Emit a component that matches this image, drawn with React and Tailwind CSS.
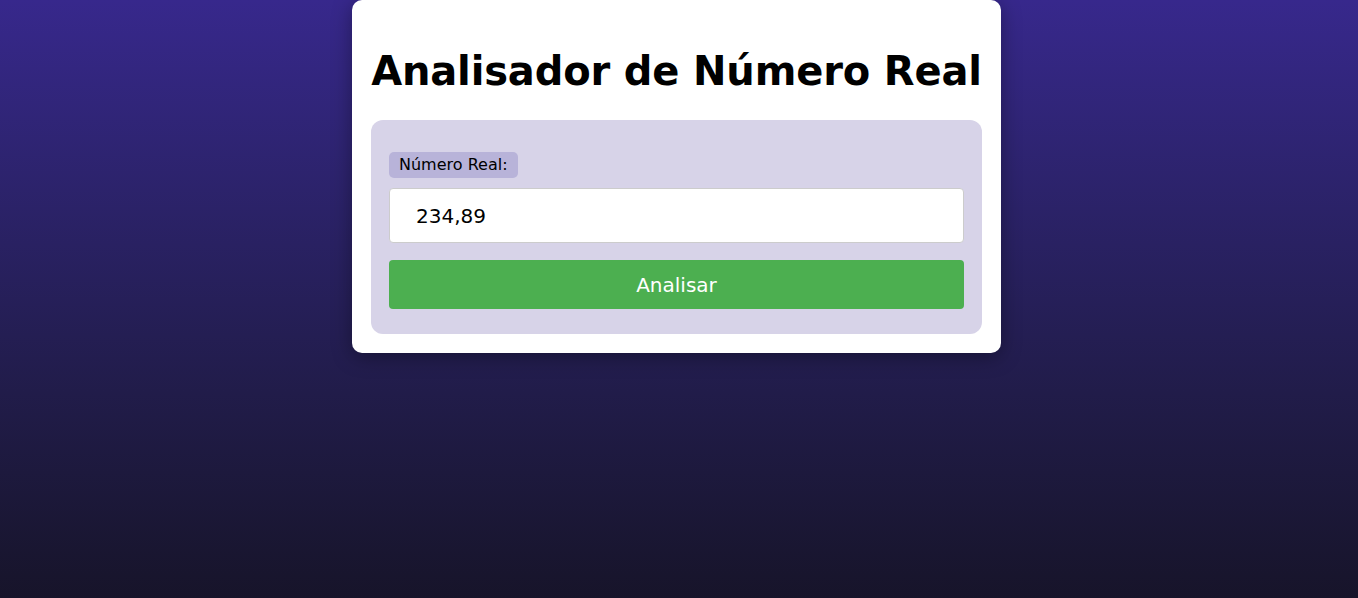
export default function App() {
  return (
    <div className="flex min-h-screen justify-center bg-gradient-to-b from-[#37288c] to-[#17142a] pr-[5px] font-['DejaVu_Sans',sans-serif]">
      <div className="h-fit w-[649px] rounded-[10px] bg-white px-[19px] pt-[47px] pb-[19px] shadow-[0_4px_20px_rgba(0,0,0,0.35)]">
        <h1 className="whitespace-nowrap text-center text-[40px] font-bold leading-[48px] tracking-[-0.16px] text-black">
          Analisador de Número Real
        </h1>
        <div className="mt-[25px] rounded-xl bg-[#d7d3e8] px-[18px] pt-[32px] pb-[25px]">
          <label className="inline-block rounded-[5px] bg-[#b8b3d9] px-[10px] py-[3px] text-[16px] leading-[20px] text-black">
            Número Real:
          </label>
          <input
            type="text"
            defaultValue="234,89"
            className="mt-[10px] block h-[55px] w-full rounded-[4px] border border-[#ccc] bg-white px-[26px] text-[20px] text-black outline-none"
          />
          <button
            type="button"
            className="mt-[17px] block h-[49px] w-full rounded-[4px] bg-[#4caf50] text-[20px] text-white"
          >
            Analisar
          </button>
        </div>
      </div>
    </div>
  );
}
